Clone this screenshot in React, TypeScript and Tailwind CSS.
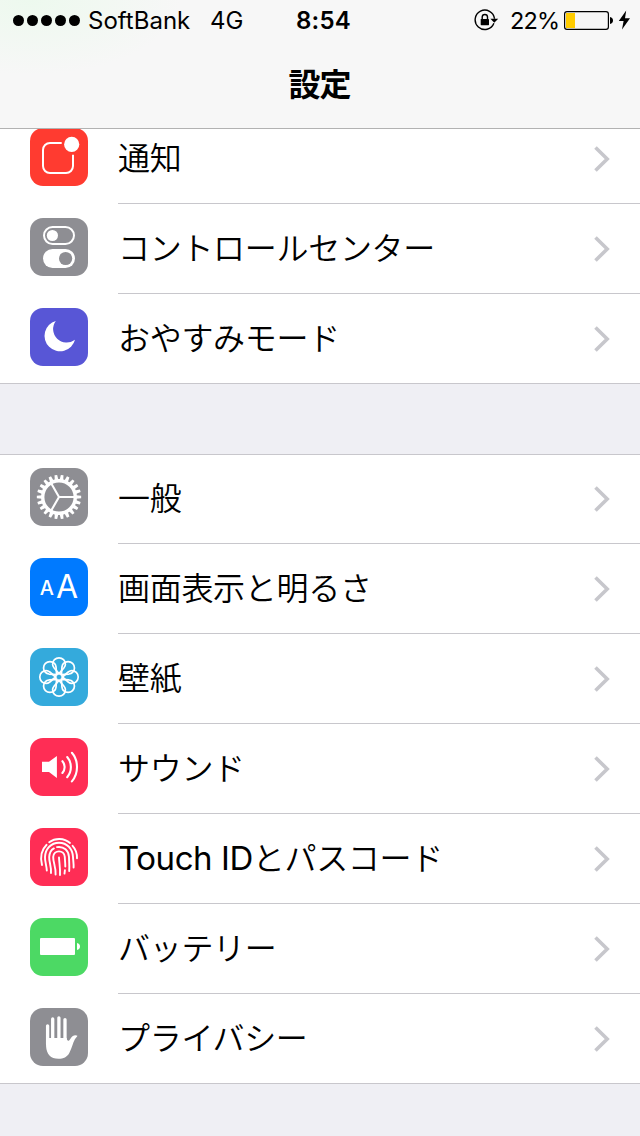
import type { ReactNode } from 'react'

type Item = {
  id: string
  color: string
  icon: ReactNode
  latin?: string
  label: string
}

// Gear outline: tapered teeth around a ring
const TEETH = 22
const gearTeeth = Array.from({ length: TEETH }, (_, i) => {
  const a = (i / TEETH) * Math.PI * 2
  const pt = (r: number, da: number) =>
    `${(29 + r * Math.cos(a + da)).toFixed(2)} ${(29 + r * Math.sin(a + da)).toFixed(2)}`
  return `M${pt(17, -0.11)}L${pt(22.2, -0.06)}L${pt(22.2, 0.06)}L${pt(17, 0.11)}Z`
}).join('')

const NotificationIcon = () => (
  <svg viewBox="0 0 58 58" fill="none">
    <path d="M31.7 15H20a7 7 0 0 0-7 7v16a7 7 0 0 0 7 7h16a7 7 0 0 0 7-7V26.7" stroke="white" strokeWidth="2" />
    <circle cx="41.7" cy="16.4" r="7.6" fill="white" />
  </svg>
)

const ControlCenterIcon = () => (
  <svg viewBox="0 0 58 58" fill="none">
    <rect x="14" y="9" width="30" height="17" rx="8.5" stroke="white" strokeWidth="2" />
    <circle cx="22.4" cy="17.5" r="5.6" fill="white" />
    <rect x="13" y="31" width="32" height="19" rx="9.5" fill="white" />
    <circle cx="35.6" cy="40.5" r="6.6" fill="#8e8e93" />
  </svg>
)

const MoonIcon = () => (
  <svg viewBox="0 0 58 58" fill="white">
    <path d="M25.8 12.9A15.5 15.5 0 1 0 45 31.8A13.6 13.6 0 0 1 25.8 12.9Z" />
  </svg>
)

const GearIcon = () => (
  <svg viewBox="0 0 58 58" fill="none">
    <path d={gearTeeth} fill="white" />
    <circle cx="29" cy="29" r="16.3" stroke="white" strokeWidth="3.4" />
    <path d="M29 29H45M29 29L21 15.1M29 29L21 42.9" stroke="white" strokeWidth="2.1" />
  </svg>
)

const TextSizeIcon = () => (
  <svg viewBox="0 0 58 58" fill="white" fontFamily="Inter, sans-serif">
    <text x="9.8" y="37" fontSize="20" fontWeight="500">A</text>
    <text x="26" y="40" fontSize="32" fontWeight="400">A</text>
  </svg>
)

const FlowerIcon = () => (
  <svg viewBox="0 0 58 58" fill="none" stroke="white" strokeWidth="1.7">
    {[0, 45, 90, 135, 180, 225, 270, 315].map((deg) => (
      <path
        key={deg}
        transform={`rotate(${deg} 29 29)`}
        d="M29 25.6L24 19.8C23 18.5 22.6 17.3 22.6 16.2A6.4 6.4 0 0 1 35.4 16.2C35.4 17.3 35 18.5 34 19.8Z"
      />
    ))}
    <circle cx="29" cy="29" r="3.4" />
  </svg>
)

const SoundIcon = () => (
  <svg viewBox="0 0 58 58" fill="none">
    <path d="M12 23.8h7L26.9 18v22L19 34.1h-7Z" fill="white" />
    <path
      d="M32.4 23.2C35.4 26.6 35.4 31.6 32.4 35M37.2 19C42.1 24.6 42.1 33.6 37.2 39.2M41.9 14.8C48.7 22.6 48.7 35.6 41.9 43.4"
      stroke="white"
      strokeWidth="2.1"
      strokeLinecap="round"
    />
  </svg>
)

const FingerprintIcon = () => (
  <svg viewBox="0 0 58 58" fill="none" stroke="white" strokeWidth="1.9" strokeLinecap="round">
    <path d="M19.2 14.2C25.3 9.8 34 9.8 40 15" />
    <path d="M16.6 16.8C11 22.3 10 29 12 37" />
    <path d="M42.6 17.8C45.8 21.4 47.2 25.7 47 30.3" />
    <path d="M16.8 42.5C16.5 37 14.8 33.5 15 29C15.4 20.8 21 14.7 29 14.7C37 14.7 42.6 20.8 43 29C43.1 32.4 43.8 35.5 43.6 39.5" />
    <path d="M21 45C21.4 38 19 34 19.2 29C19.4 25 21 22 23.9 20.4" />
    <path d="M27 19.1C34 18 38.7 22.7 39 29C39.1 33.5 39.6 38 39.2 43" />
    <path d="M25.6 46.5C26 39 23 34 23.2 29C23.6 21.5 34.4 21.5 34.8 29C34.9 32 35.3 35 35.3 38.5" />
    <path d="M34.9 42.3L34.5 45.6" />
    <path d="M30 47C30.4 40 29.2 35 29 29.5" />
  </svg>
)

const BatteryIcon = () => (
  <svg viewBox="0 0 58 58" fill="white">
    <rect x="10" y="20" width="35" height="17" rx="1" />
    <path d="M47 25C49 25.4 50 26.8 50 28.5C50 30.2 49 31.6 47 32Z" />
  </svg>
)

const HandIcon = () => (
  <svg viewBox="0 0 58 58" fill="none">
    <path d="M17.6 17.8V36M22.7 11V34M28.9 9.8V34M35 11.6V34" stroke="white" strokeWidth="3.3" strokeLinecap="round" />
    <path
      d="M16 30H36.7C36.8 32 37.7 33 38.8 32.7C40.2 31.6 41 29.5 42.5 28.3C44 27.2 46 26.8 47.4 27.8C47.3 28.9 45.8 29.8 44.9 31.3C42.8 35 41.9 40.2 39.3 45C37.2 49 33.5 50.8 28.5 50.8C20.5 50.8 16.6 46 16.1 38.5Z"
      fill="white"
    />
  </svg>
)

const groups: Item[][] = [
  [
    { id: 'notifications', color: 'bg-[#ff3b30]', icon: <NotificationIcon />, label: '通知' },
    { id: 'control-center', color: 'bg-[#8e8e93]', icon: <ControlCenterIcon />, label: 'コントロールセンター' },
    { id: 'dnd', color: 'bg-[#5856d6]', icon: <MoonIcon />, label: 'おやすみモード' },
  ],
  [
    { id: 'general', color: 'bg-[#8e8e93]', icon: <GearIcon />, label: '一般' },
    { id: 'display', color: 'bg-[#007aff]', icon: <TextSizeIcon />, label: '画面表示と明るさ' },
    { id: 'wallpaper', color: 'bg-[#34aadc]', icon: <FlowerIcon />, label: '壁紙' },
    { id: 'sound', color: 'bg-[#ff2d55]', icon: <SoundIcon />, label: 'サウンド' },
    { id: 'touch-id', color: 'bg-[#ff2d55]', icon: <FingerprintIcon />, latin: 'Touch ID', label: 'とパスコード' },
    { id: 'battery', color: 'bg-[#4cd964]', icon: <BatteryIcon />, label: 'バッテリー' },
    { id: 'privacy', color: 'bg-[#8e8e93]', icon: <HandIcon />, label: 'プライバシー' },
  ],
]

const Row = ({ item, last }: { item: Item; last: boolean }) => (
  <div className={`flex h-[90px] pl-[30px] ${last ? 'border-b border-[#c8c7cc]' : ''}`}>
    <div className={`mt-[14px] size-[58px] shrink-0 rounded-[13px] ${item.color}`}>{item.icon}</div>
    <div
      className={`ml-[30px] flex flex-1 items-center justify-between pr-[30px] ${last ? '' : 'border-b border-[#c8c7cc]'}`}
    >
      <div
        className={`flex items-baseline whitespace-nowrap text-[32px] leading-none text-black ${item.latin ? 'pb-[3px]' : 'pb-[5px]'}`}
      >
        {item.latin && (
          <span className="font-['Inter',sans-serif] text-[33px] tracking-[-0.45px]">{item.latin}</span>
        )}
        <span className="font-['Noto_Sans_CJK_JP',sans-serif] font-[350] tracking-[-0.3px]">{item.label}</span>
      </div>
      <svg className="h-[26px] w-[16px]" viewBox="0 0 16 26" fill="none">
        <path d="M1.5 1.5L13.2 13L1.5 24.5" stroke="#c7c7cc" strokeWidth="3.6" />
      </svg>
    </div>
  </div>
)

const StatusBar = () => (
  <div className="flex h-10 items-center pl-[13px] font-['Inter',sans-serif] text-2xl text-black">
    <div className="flex gap-[3px]">
      {[0, 1, 2, 3, 4].map((i) => (
        <span key={i} className="size-[11px] rounded-full bg-black" />
      ))}
    </div>
    <span className="ml-2 w-[122px] pt-[2px]">SoftBank</span>
    <span className="w-[86px] pt-[2px]">4G</span>
    <span className="w-[178px] pt-[2px] font-semibold tracking-[0.2px]">8:54</span>
    <svg className="h-[22px] w-[25px]" viewBox="0 0 25 22" fill="none">
      <path d="M19.9 14.3A9.7 9.7 0 1 1 20.5 9.8" stroke="black" strokeWidth="1.4" />
      <path d="M16.4 9.8H24.2L20.3 13.8Z" fill="black" />
      <rect x="6.7" y="10" width="8.3" height="6.2" rx="0.6" fill="black" />
      <path d="M8.2 10.5V8.1a2.65 2.65 0 0 1 5.3 0V10.5" stroke="black" strokeWidth="1.4" />
    </svg>
    <span className="ml-[11px] w-[54px] pt-[2px] text-[23.5px] tracking-[-0.8px]">22%</span>
    <svg className="h-[19px] w-[50px]" viewBox="0 0 50 19" fill="none">
      <rect x="0.6" y="0.6" width="43.8" height="17.8" rx="2.4" stroke="black" strokeWidth="1.2" />
      <rect x="2" y="2" width="9" height="15" fill="#ffcc00" />
      <path d="M46 6C48 6.6 49 7.8 49 9.5C49 11.2 48 12.4 46 13Z" fill="black" />
    </svg>
    <svg className="ml-[4px] h-[20px] w-[13px]" viewBox="0 0 13 20">
      <path d="M8.2 0.5L0.8 11H5.6L4 19.5L12 8.2H7Z" fill="black" />
    </svg>
  </div>
)

const App = () => (
  <div className="h-[1136px] w-[640px] overflow-hidden bg-[#efeff4]">
    <header className="relative z-10 h-[129px] border-b border-[#b2b2b2] bg-[#f7f7f7] bg-[radial-gradient(ellipse_150px_75px_at_30px_0px,#edf9ee,#f7f7f7)]">
      <StatusBar />
      <h1 className="flex h-[84px] items-center justify-center pr-px font-['Noto_Sans_CJK_JP',sans-serif] text-[32px] font-bold tracking-[-1px] text-black">
        設定
      </h1>
    </header>
    <main className="-mt-[15px] space-y-[70px]">
      {groups.map((items, g) => (
        <section key={g} className={g > 0 ? 'bg-white shadow-[inset_0_1px_0_0_#c8c7cc]' : 'bg-white'}>
          {items.map((item, i) => (
            <Row key={item.id} item={item} last={i === items.length - 1} />
          ))}
        </section>
      ))}
    </main>
  </div>
)

export default App
